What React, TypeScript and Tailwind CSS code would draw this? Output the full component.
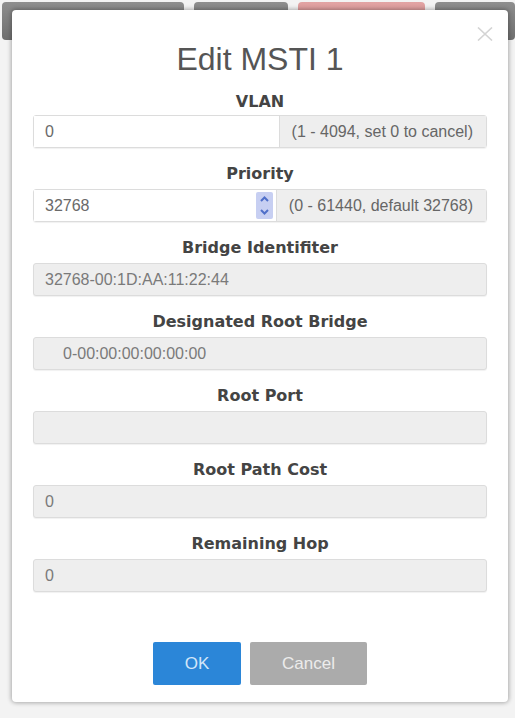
import React from "react";

const labelCls =
  "text-center font-bold text-[16px] leading-[22px] text-[#444] [font-family:'DejaVu_Sans',sans-serif]";

function Label({ text, first }: { text: string; first?: boolean }) {
  return (
    <div className={first ? `${labelCls} pt-[12px] pb-[2px]` : `${labelCls} pt-[15px] pb-[4px]`}>
      {text}
    </div>
  );
}

function ReadOnly({ value, indent }: { value: string; indent?: boolean }) {
  return (
    <div
      className={
        indent
          ? "h-[33px] flex items-center rounded-[3px] border border-[#dcdcdc] bg-[#eeeeee] pl-[29px] text-[16px] text-[#7a7a7a] shadow-[0_1px_1px_rgba(0,0,0,0.06)]"
          : "h-[33px] flex items-center rounded-[3px] border border-[#dcdcdc] bg-[#eeeeee] pl-[11px] text-[16px] text-[#7a7a7a] shadow-[0_1px_1px_rgba(0,0,0,0.06)]"
      }
    >
      {value}
    </div>
  );
}

export default function App() {
  return (
    <div className="relative w-[515px] h-[718px] overflow-hidden bg-[#f3f3f3] [font-family:'Liberation_Sans',Arial,sans-serif]">
      {/* background toolbar buttons */}
      <div className="flex pt-[2px] pl-[2px] gap-[10px]">
        <div className="w-[183px] h-[38px] rounded-[4px] bg-gradient-to-b from-[#8e8e8e] to-[#6f6f6f]" />
        <div className="w-[95px] h-[38px] rounded-[4px] bg-gradient-to-b from-[#8e8e8e] to-[#6f6f6f]" />
        <div className="w-[128px] h-[38px] rounded-[4px] bg-gradient-to-b from-[#e2a3a3] to-[#cc8585]" />
        <div className="w-[80px] h-[38px] rounded-[4px] bg-gradient-to-b from-[#8e8e8e] to-[#6f6f6f]" />
      </div>

      {/* modal */}
      <div className="absolute left-[12px] top-[10px] w-[496px] h-[692px] rounded-[4px] bg-white shadow-[0_0_4px_1px_rgba(0,0,0,0.3)]">
        <svg
          className="absolute left-[465px] top-[17px]"
          width="16"
          height="14"
          viewBox="0 0 16 14"
        >
          <path d="M1 0.5 L15 13.5 M15 0.5 L1 13.5" stroke="#d4d4d4" strokeWidth="1.6" fill="none" />
        </svg>

        <div className="flex flex-col pt-[29px] px-[21px]">
          <div className="text-center text-[32px] leading-[40px] text-[#555]">Edit MSTI 1</div>

          <Label text="VLAN" first />
          <div className="flex h-[33px] rounded-[3px] border border-[#dcdcdc] shadow-[0_1px_1px_rgba(0,0,0,0.06)]">
            <div className="flex-1 flex items-center bg-white pl-[11px] text-[16px] text-[#6a6a6a]">0</div>
            <div className="w-[207px] flex items-center justify-end pr-[13px] border-l border-[#dcdcdc] bg-[#eeeeee] text-[16px] text-[#666]">
              (1 - 4094, set 0 to cancel)
            </div>
          </div>

          <Label text="Priority" />
          <div className="flex h-[33px] rounded-[3px] border border-[#dcdcdc] shadow-[0_1px_1px_rgba(0,0,0,0.06)]">
            <div className="flex-1 flex items-center bg-white pl-[11px] pr-[3px] text-[16px] text-[#6a6a6a]">
              <span className="flex-1">32768</span>
              <div className="w-[17px] h-[27px] rounded-[2px] bg-[#c7cff2] flex flex-col items-center justify-between py-[4px]">
                <svg width="9" height="6" viewBox="0 0 9 6">
                  <path d="M1 5 L4.5 1.5 L8 5" stroke="#4f6fc9" strokeWidth="2" fill="none" />
                </svg>
                <svg width="9" height="6" viewBox="0 0 9 6">
                  <path d="M1 1 L4.5 4.5 L8 1" stroke="#4f6fc9" strokeWidth="2" fill="none" />
                </svg>
              </div>
            </div>
            <div className="w-[210px] flex items-center justify-end pr-[13px] border-l border-[#dcdcdc] bg-[#eeeeee] text-[16px] text-[#666]">
              (0 - 61440, default 32768)
            </div>
          </div>

          <Label text="Bridge Identifiter" />
          <ReadOnly value="32768-00:1D:AA:11:22:44" />

          <Label text="Designated Root Bridge" />
          <ReadOnly value="0-00:00:00:00:00:00" indent />

          <Label text="Root Port" />
          <ReadOnly value="" />

          <Label text="Root Path Cost" />
          <ReadOnly value="0" />

          <Label text="Remaining Hop" />
          <ReadOnly value="0" />

          <div className="flex justify-center gap-[9px] mt-[50px]">
            <button className="w-[88px] h-[43px] rounded-[2px] bg-[#2b86d8] text-[17px] text-[#d3e6f8]">OK</button>
            <button className="w-[117px] h-[43px] rounded-[2px] bg-[#ababab] text-[17px] text-[#ececec]">Cancel</button>
          </div>
        </div>
      </div>
    </div>
  );
}
